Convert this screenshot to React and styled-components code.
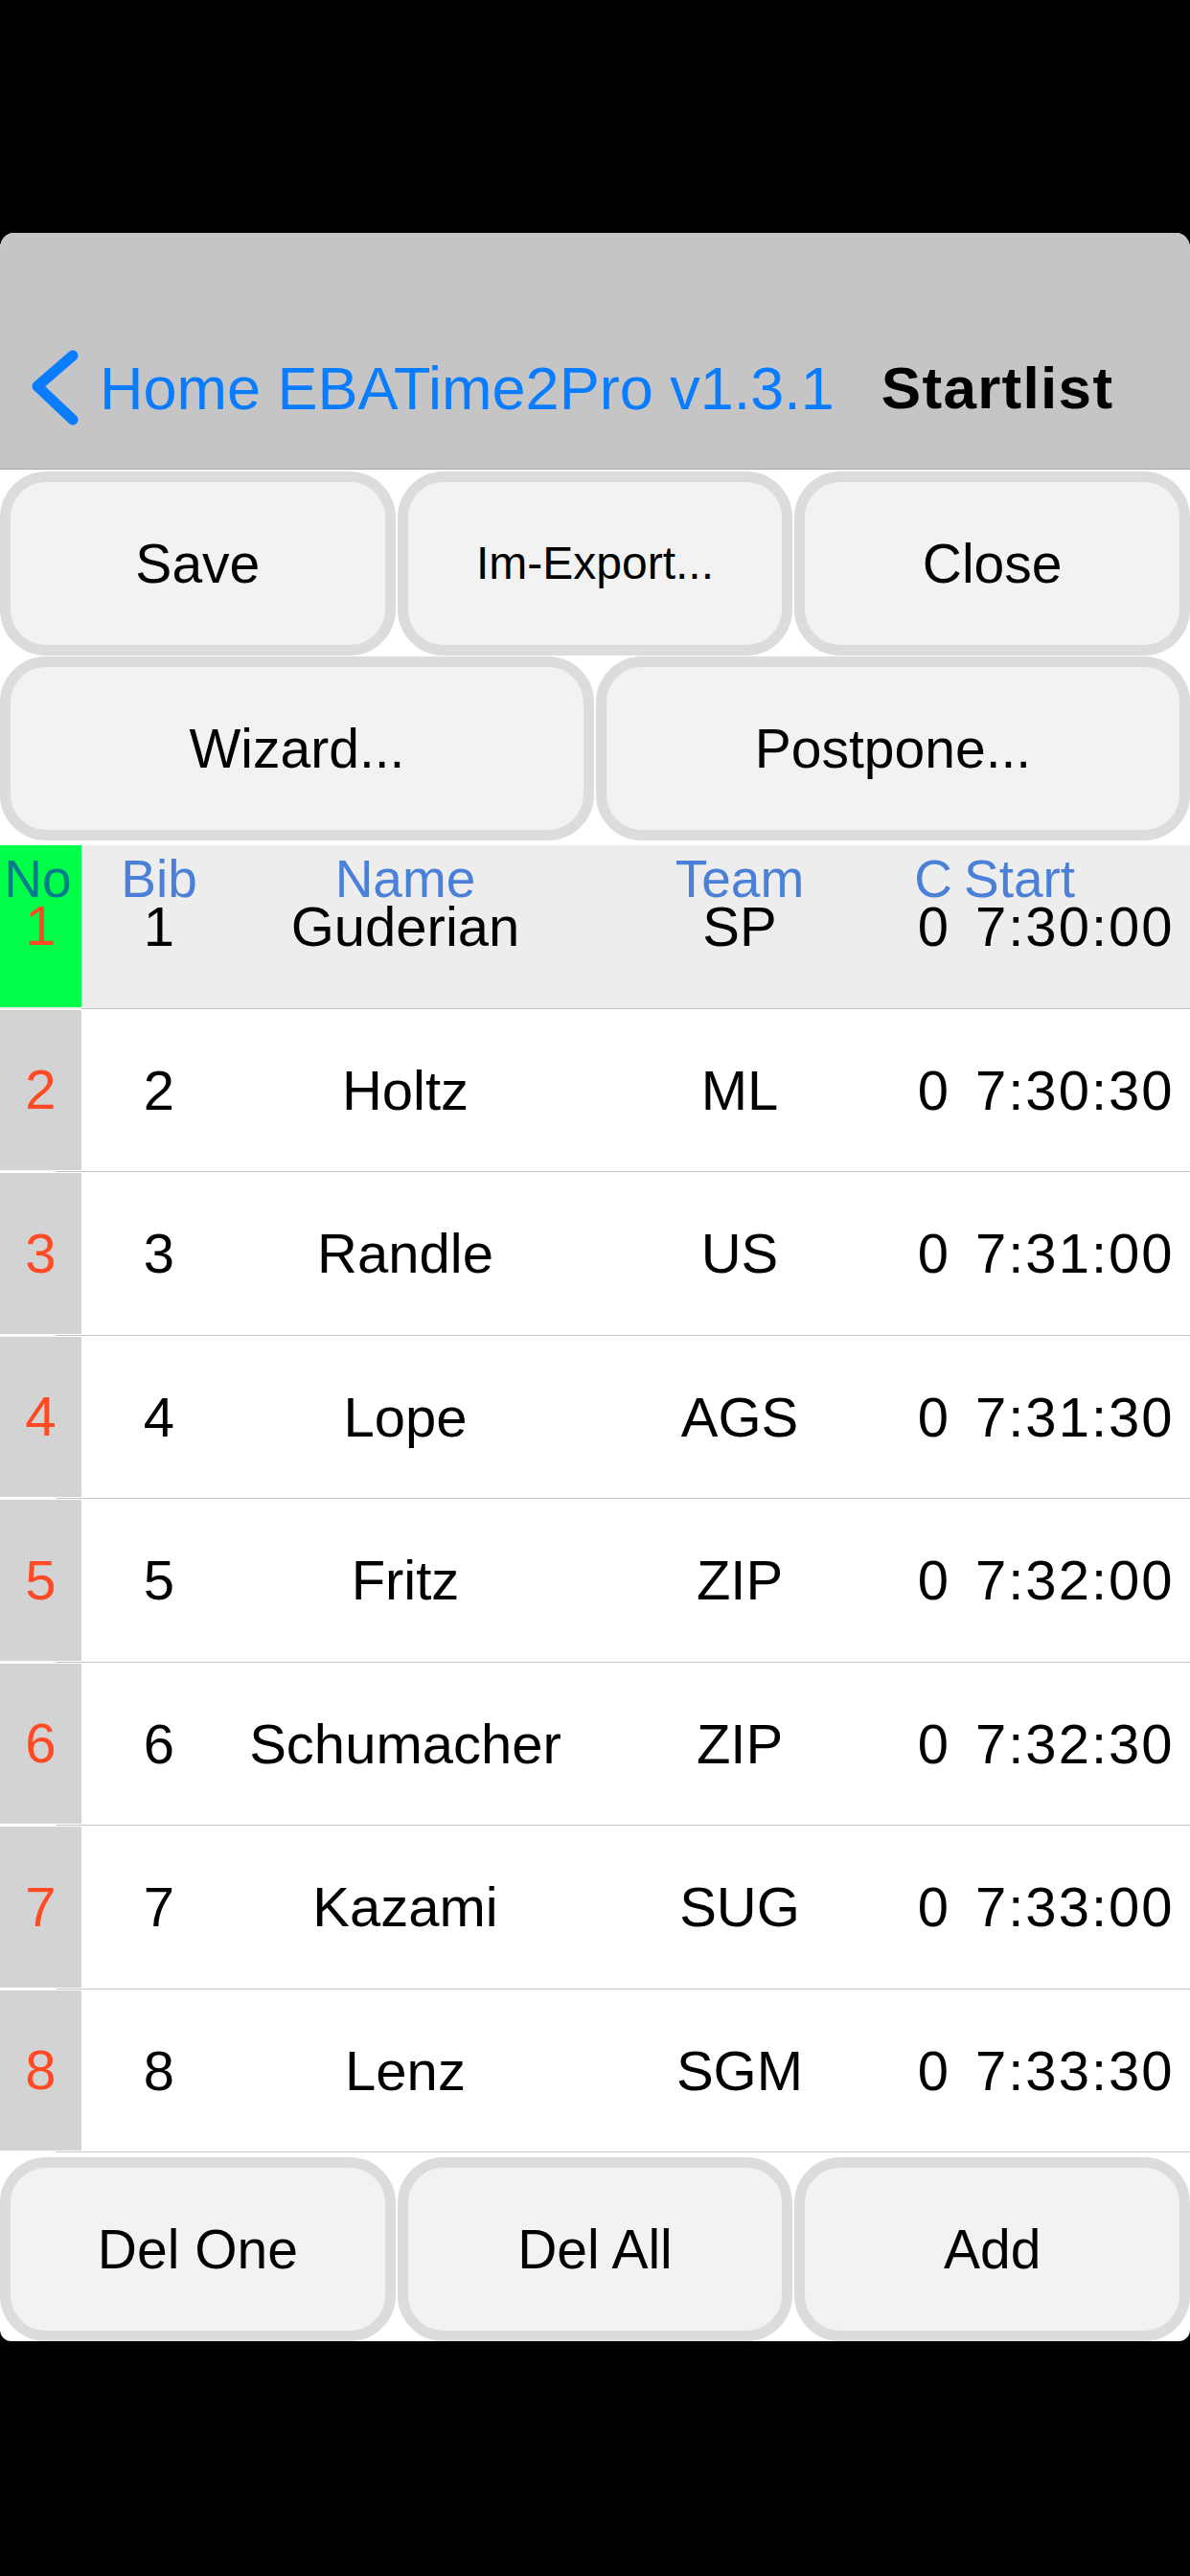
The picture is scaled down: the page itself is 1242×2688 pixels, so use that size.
import React from "react";
import styled, { createGlobalStyle } from "styled-components";

const GlobalStyle = createGlobalStyle`
  html, body {
    margin: 0;
    padding: 0;
    background: #000;
  }
  body {
    font-family: "Liberation Sans", Arial, sans-serif;
    -webkit-font-smoothing: antialiased;
  }
  * { box-sizing: border-box; }
`;

const Screen = styled.div`
  width: 1242px;
  height: 2688px;
  background: #000;
  padding-top: 243px;
`;

const Panel = styled.div`
  width: 1242px;
  background: #fff;
  border-radius: 15px 15px 12px 12px;
  overflow: hidden;
`;

const NavBar = styled.div`
  height: 247px;
  background: #c5c5c5;
  border-bottom: 1px solid #a9a9a9;
  display: flex;
  align-items: flex-end;
  padding: 0 0 40px 30px;
`;

const NavItems = styled.div`
  display: flex;
  align-items: center;
`;

const BackButton = styled.div`
  display: flex;
  align-items: center;
  color: #0a7cff;
`;

const BackLabel = styled.span`
  font-size: 63px;
  line-height: 1;
  margin-left: 18px;
  white-space: nowrap;
`;

const Title = styled.span`
  font-size: 62px;
  line-height: 1;
  font-weight: bold;
  letter-spacing: 1.3px;
  color: #000;
  margin-left: 49px;
  white-space: nowrap;
`;

const Toolbar = styled.div`
  display: flex;
  flex-direction: column;
  gap: 1px;
  padding: ${(p) => p.$pad || "0"};
`;

const ButtonRow = styled.div`
  display: grid;
  grid-template-columns: repeat(${(p) => p.$cols}, 1fr);
  gap: 2px;
`;

const ActionButton = styled.div`
  height: 192px;
  background: #f2f2f2;
  border: 11px solid #dcdcdc;
  border-radius: 48px;
  display: flex;
  align-items: center;
  justify-content: center;
  font-size: ${(p) => (p.$small ? "48px" : "57px")};
  line-height: 1;
  color: #000;
  white-space: nowrap;
`;

const COLS = "85px 162px 352px 346px 58px 1fr";

const Table = styled.div`
  position: relative;
`;

const HeaderOverlay = styled.div`
  position: absolute;
  top: 0;
  left: 0;
  right: 0;
  z-index: 2;
  display: grid;
  grid-template-columns: ${COLS};
  padding-top: 8px;
  font-size: 55px;
  line-height: 1;
  pointer-events: none;
`;

const HeaderLabel = styled.span`
  color: ${(p) => (p.$onGreen ? "#067a8e" : "#4a80d8")};
  text-align: ${(p) => p.$align || "center"};
  padding-left: ${(p) => p.$padLeft || "0"};
  padding-right: ${(p) => p.$padRight || "0"};
  white-space: nowrap;
`;

const Row = styled.div`
  position: relative;
  height: 170.5px;
  display: grid;
  grid-template-columns: ${COLS};
  align-items: center;
  background: ${(p) => (p.$selected ? "#ededed" : "#fff")};
  font-size: 58px;
  line-height: 1;
  color: #000;

  &::after {
    content: "";
    position: absolute;
    left: ${(p) => (p.$selected ? "85px" : "58px")};
    right: 0;
    bottom: 0;
    height: 1px;
    background: #c6c6c9;
  }
`;

const NoCell = styled.div`
  align-self: stretch;
  margin: ${(p) => (p.$selected ? "0 0 2px" : "1px 0 2px")};
  background: ${(p) => (p.$selected ? "#00ff48" : "#d3d3d3")};
  color: #ff4a24;
  display: flex;
  align-items: center;
  justify-content: center;
`;

const Cell = styled.div`
  text-align: ${(p) => p.$align || "center"};
  padding-left: ${(p) => p.$padLeft || "0"};
  letter-spacing: ${(p) => p.$spacing || "0"};
  white-space: nowrap;
`;

const Chevron = () => (
  <svg width="56" height="88" viewBox="0 0 56 88" aria-hidden="true">
    <polyline
      points="46,10 9,42 46,77"
      fill="none"
      stroke="#0a7cff"
      strokeWidth="11"
      strokeLinecap="round"
      strokeLinejoin="round"
    />
  </svg>
);

const entries = [
  { no: 1, bib: 1, name: "Guderian", team: "SP", c: 0, start: "7:30:00" },
  { no: 2, bib: 2, name: "Holtz", team: "ML", c: 0, start: "7:30:30" },
  { no: 3, bib: 3, name: "Randle", team: "US", c: 0, start: "7:31:00" },
  { no: 4, bib: 4, name: "Lope", team: "AGS", c: 0, start: "7:31:30" },
  { no: 5, bib: 5, name: "Fritz", team: "ZIP", c: 0, start: "7:32:00" },
  { no: 6, bib: 6, name: "Schumacher", team: "ZIP", c: 0, start: "7:32:30" },
  { no: 7, bib: 7, name: "Kazami", team: "SUG", c: 0, start: "7:33:00" },
  { no: 8, bib: 8, name: "Lenz", team: "SGM", c: 0, start: "7:33:30" },
];

export default function App() {
  return (
    <Screen>
      <GlobalStyle />
      <Panel>
        <NavBar>
          <NavItems>
            <BackButton>
              <Chevron />
              <BackLabel>Home EBATime2Pro v1.3.1</BackLabel>
            </BackButton>
            <Title>Startlist</Title>
          </NavItems>
        </NavBar>

        <Toolbar $pad="2px 0 5px">
          <ButtonRow $cols={3}>
            <ActionButton>Save</ActionButton>
            <ActionButton $small>Im-Export...</ActionButton>
            <ActionButton>Close</ActionButton>
          </ButtonRow>
          <ButtonRow $cols={2}>
            <ActionButton>Wizard...</ActionButton>
            <ActionButton>Postpone...</ActionButton>
          </ButtonRow>
        </Toolbar>

        <Table>
          <HeaderOverlay>
            <HeaderLabel $onGreen $padRight="6px">No</HeaderLabel>
            <HeaderLabel>Bib</HeaderLabel>
            <HeaderLabel>Name</HeaderLabel>
            <HeaderLabel>Team</HeaderLabel>
            <HeaderLabel>C</HeaderLabel>
            <HeaderLabel $align="left" $padLeft="3px">Start</HeaderLabel>
          </HeaderOverlay>
          {entries.map((e, i) => (
            <Row key={e.no} $selected={i === 0}>
              <NoCell $selected={i === 0}>{e.no}</NoCell>
              <Cell>{e.bib}</Cell>
              <Cell>{e.name}</Cell>
              <Cell>{e.team}</Cell>
              <Cell>{e.c}</Cell>
              <Cell $align="left" $padLeft="15px" $spacing="2px">
                {e.start}
              </Cell>
            </Row>
          ))}
        </Table>

        <Toolbar $pad="5px 0 0">
          <ButtonRow $cols={3}>
            <ActionButton>Del One</ActionButton>
            <ActionButton>Del All</ActionButton>
            <ActionButton>Add</ActionButton>
          </ButtonRow>
        </Toolbar>
      </Panel>
    </Screen>
  );
}
